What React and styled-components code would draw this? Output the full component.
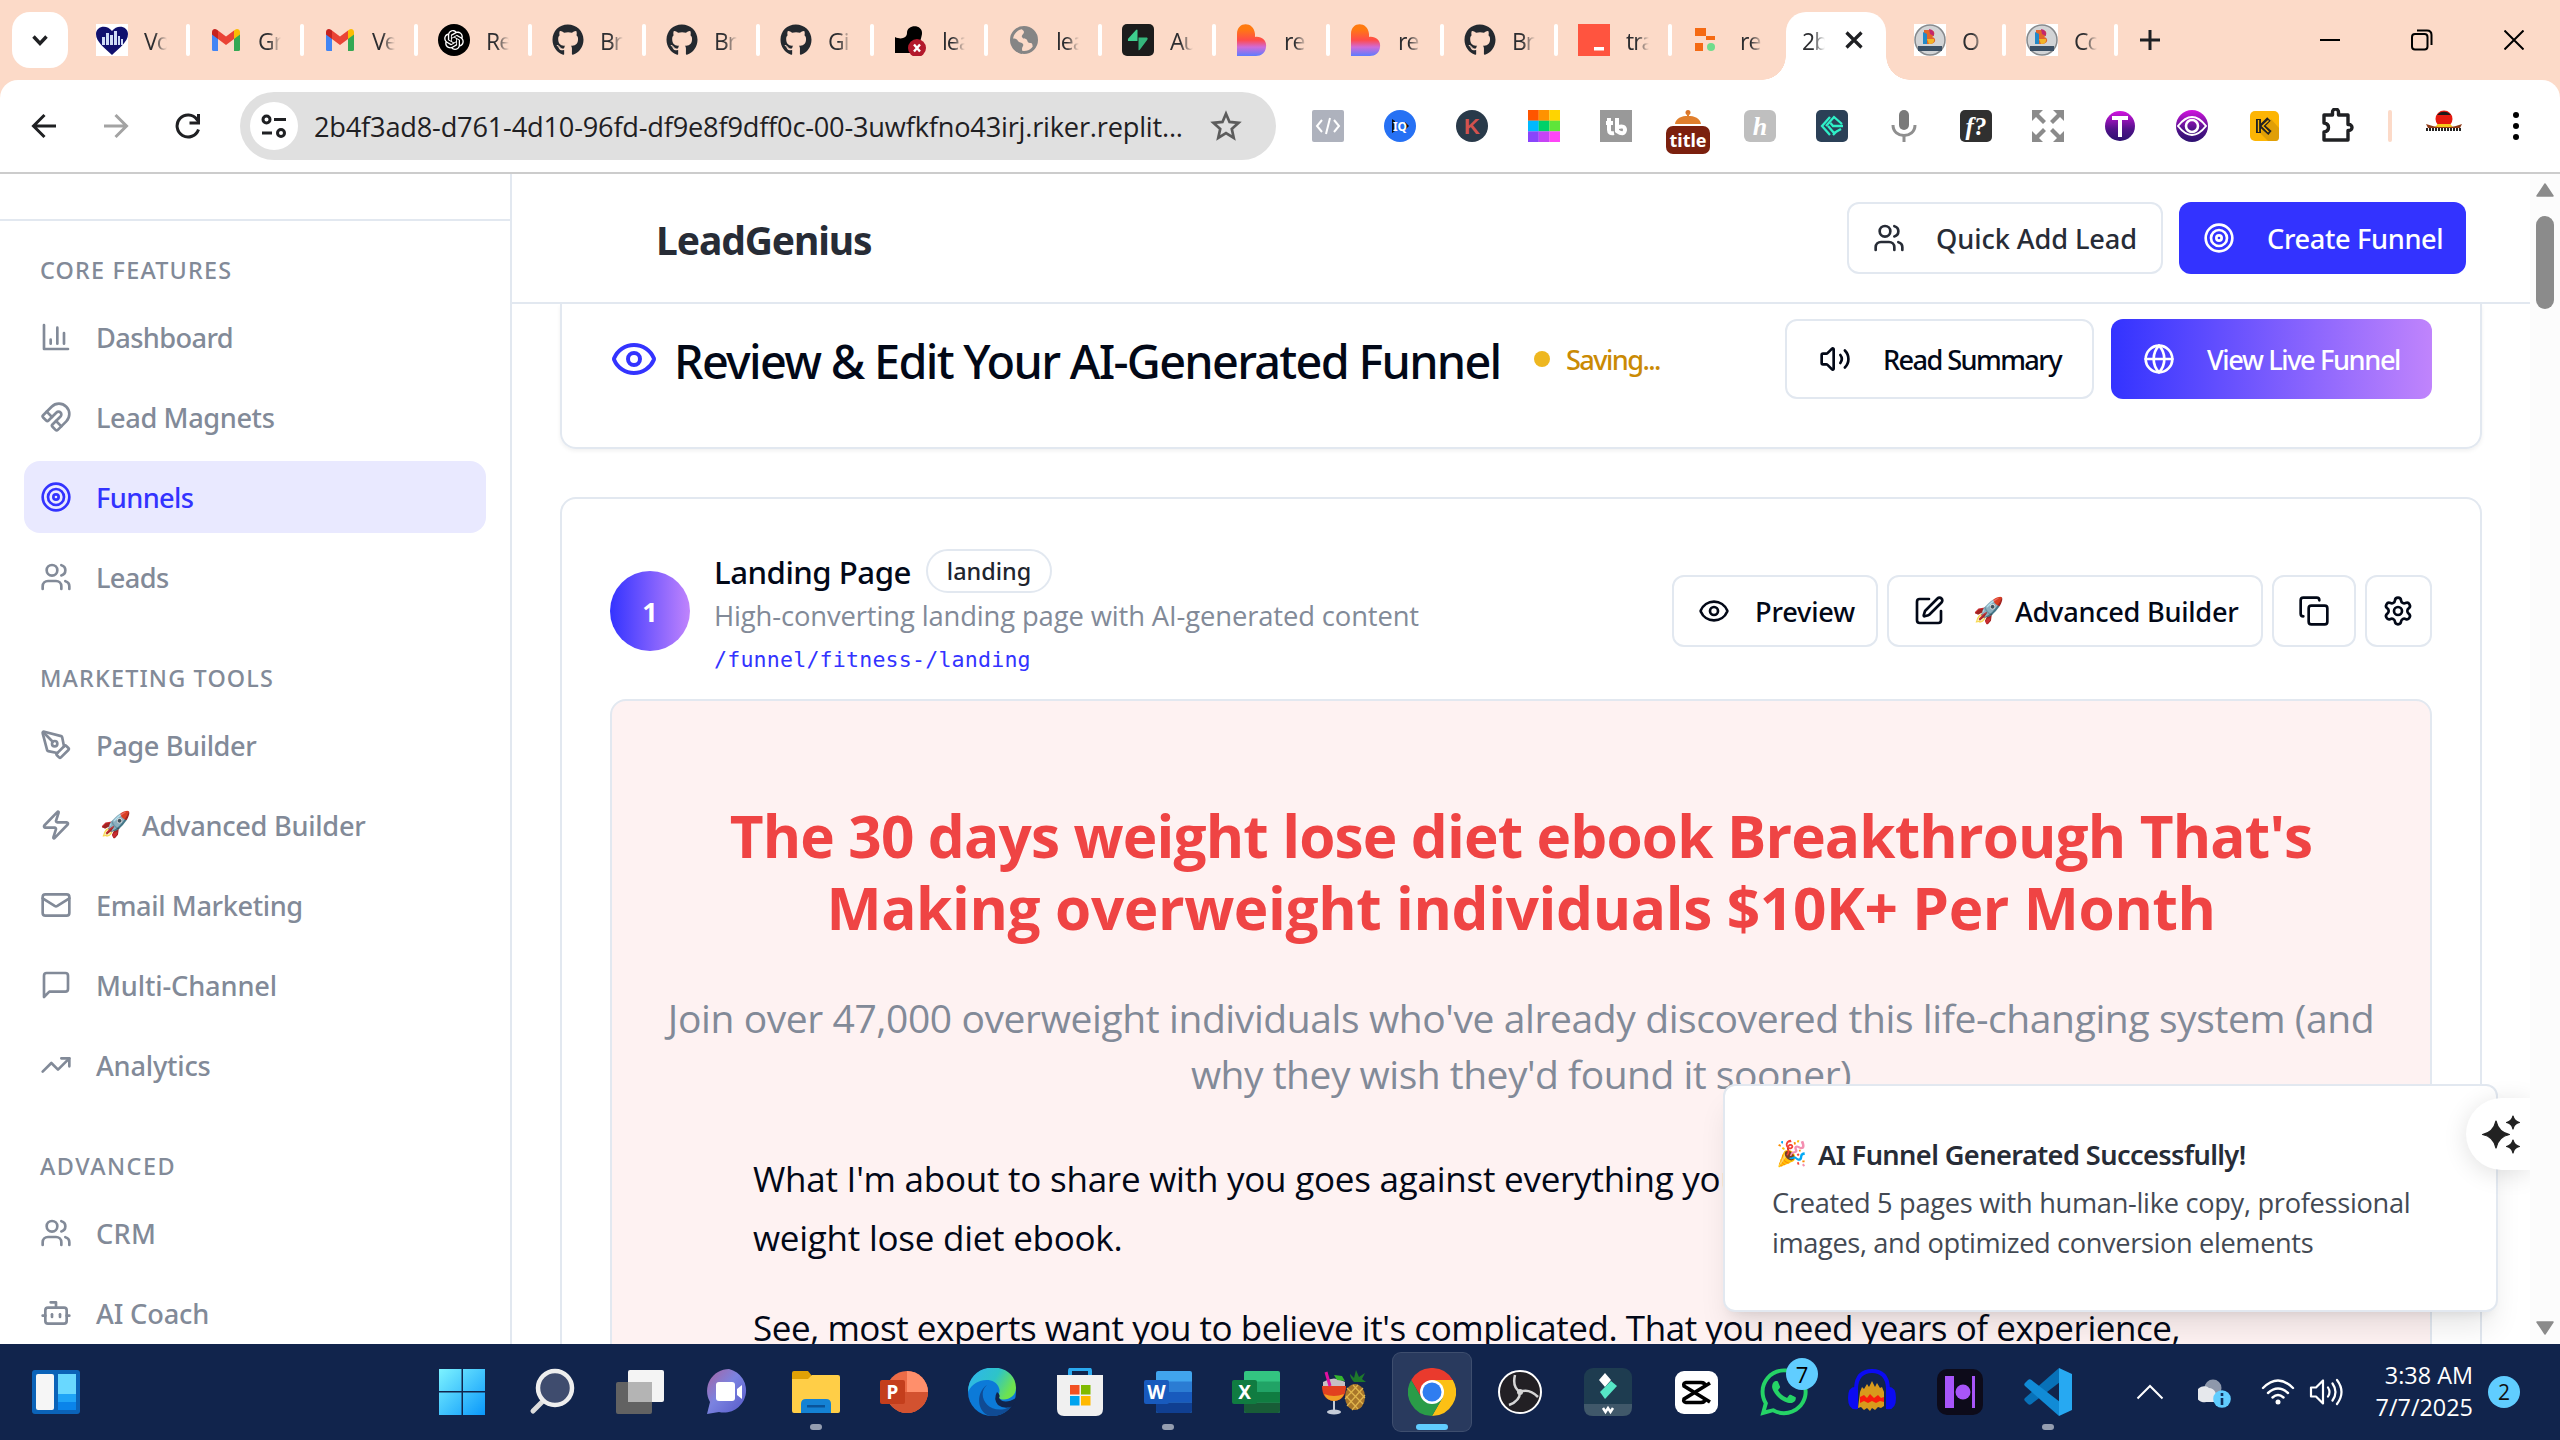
import React from "react";
import styled, { createGlobalStyle, css } from "styled-components";
import { FaGithub, FaWhatsapp } from "react-icons/fa";
import { RiOpenaiFill } from "react-icons/ri";
import { Magnet, PenTool, Zap, Bot, Mail, Settings, Copy, SquarePen } from "lucide-react";

const sans = `"Noto Sans", "Open Sans", sans-serif`;
const sansText = `"Open Sans", "Noto Sans", sans-serif`;
const line = "#e2e8f0";
const muted = "#828a98";
const brand = "#3333ff";
const ink = "#020817";

const Global = createGlobalStyle`
  *, *::before, *::after { box-sizing: border-box; }
  body { margin: 0; background: #fff; font-family: ${sans}; }
  svg { display: block; flex: none; }
`;

/* ---------- line icons ---------- */
const Line = styled.svg.attrs({
  viewBox: "0 0 24 24", fill: "none", stroke: "currentColor",
  strokeWidth: 2, strokeLinecap: "round", strokeLinejoin: "round",
})`
  width: ${(p) => p.$size || 32}px;
  height: ${(p) => p.$size || 32}px;
`;
const BarChart = () => <Line><path d="M3 3v18h18" /><path d="M18 17V9" /><path d="M13 17V5" /><path d="M8 17v-3" /></Line>;
const Target = () => <Line><circle cx="12" cy="12" r="10" /><circle cx="12" cy="12" r="6" /><circle cx="12" cy="12" r="2" /></Line>;
const Users = () => <Line><path d="M16 21v-2a4 4 0 0 0-4-4H6a4 4 0 0 0-4 4v2" /><circle cx="9" cy="7" r="4" /><path d="M22 21v-2a4 4 0 0 0-3-3.87" /><path d="M16 3.13a4 4 0 0 1 0 7.75" /></Line>;
const Chat = () => <Line><path d="M21 15a2 2 0 0 1-2 2H7l-4 4V5a2 2 0 0 1 2-2h14a2 2 0 0 1 2 2z" /></Line>;
const Trend = () => <Line><path d="m22 7-8.5 8.5-5-5L2 17" /><path d="M16 7h6v6" /></Line>;
const Eye = ({ size }) => <Line $size={size}><path d="M2.062 12.348a1 1 0 0 1 0-.696 10.75 10.75 0 0 1 19.876 0 1 1 0 0 1 0 .696 10.75 10.75 0 0 1-19.876 0" /><circle cx="12" cy="12" r="3" /></Line>;
const Volume = () => <Line><path d="M11 4.7a.7.7 0 0 0-1.2-.5L6.4 7.6A1.4 1.4 0 0 1 5.4 8H3a1 1 0 0 0-1 1v6a1 1 0 0 0 1 1h2.4a1.4 1.4 0 0 1 1 .4l3.4 3.4a.7.7 0 0 0 1.2-.5z" /><path d="M16 9a5 5 0 0 1 0 6" /><path d="M19.4 18.4a9 9 0 0 0 0-12.8" /></Line>;
const Globe = () => <Line><circle cx="12" cy="12" r="10" /><path d="M12 2a14.5 14.5 0 0 0 0 20 14.5 14.5 0 0 0 0-20" /><path d="M2 12h20" /></Line>;

/* ---------- browser frame ---------- */
const Screen = styled.div`
  width: 2560px; height: 1440px; overflow: hidden;
  display: flex; flex-direction: column; background: #fff;
`;
const TabStrip = styled.div`
  flex: none; height: 80px; display: flex; align-items: stretch;
  padding-left: 12px; background: #fcdac8; color: #1f2023;
`;
const TabSearch = styled.div`
  width: 56px; height: 56px; margin: 12px 8px 0 0; border-radius: 18px; background: #fff;
  display: flex; align-items: center; justify-content: center;
`;
const Tab = styled.div`
  width: ${(p) => p.$w || 114}px; padding-left: ${(p) => p.$pad || 20}px; height: 80px;
  display: flex; align-items: center; position: relative;
  &::after { content: ""; position: absolute; right: 0; top: 24px; width: 4px; height: 32px; border-radius: 2px;
    background: ${(p) => (p.$last ? "transparent" : "#fff")}; }
`;
const TabTitle = styled.span`
  width: 23px; margin-left: 16px; overflow: hidden; white-space: nowrap; flex: none;
  font: 400 23px/32px ${sansText}; letter-spacing: -1px; color: #2c2d30; padding-top: 2px;
  mask-image: linear-gradient(90deg, #000 45%, transparent 100%);
`;
const ActiveTab = styled.div`
  width: 100px; height: 68px; margin-top: 12px; background: #fff; border-radius: 20px 20px 0 0;
  display: flex; align-items: center; padding: 0 0 12px 16px; position: relative;
  &::before, &::after { content: ""; position: absolute; bottom: 0; width: 24px; height: 24px; }
  &::before { left: -24px; background: radial-gradient(circle at 0 0, transparent 23.5px, #fff 24px); }
  &::after { right: -24px; background: radial-gradient(circle at 100% 0, transparent 23.5px, #fff 24px); }
  ${TabTitle} { margin-left: 0; }
  svg { margin-left: 20px; }
`;
const NewTab = styled.div`
  width: 64px; display: flex; align-items: center; justify-content: center;
`;
const WindowButtons = styled.div`
  margin-left: auto; display: flex; align-items: center;
`;
const WindowButton = styled.div`
  width: 92px; display: flex; justify-content: center;
`;
const ToolbarFrame = styled.div` flex: none; background: #fcdac8; `;
const Toolbar = styled.div`
  height: 94px; padding: 0 8px; background: #fff; border-radius: 18px 18px 0 0;
  border-bottom: 2px solid #ccc; display: flex; align-items: center; color: #1f2023;
`;
const ToolCell = styled.div`
  width: 72px; height: 64px; display: flex; align-items: center; justify-content: center;
`;
const LabelCell = styled(ToolCell)` padding-top: 12px; `;
const UrlBar = styled.div`
  width: 1036px; height: 68px; margin: 0 16px; padding: 0 34px 0 10px; border-radius: 34px; background: #e0e0e0;
  display: flex; align-items: center;
`;
const SiteInfo = styled.div`
  width: 48px; height: 48px; border-radius: 50%; background: #fff; display: flex; align-items: center; justify-content: center;
`;
const Url = styled.span`
  flex: 1; margin-left: 16px; white-space: nowrap; font: 400 27.2px/40px ${sansText}; letter-spacing: -0.2px; color: #1f2023; padding-top: 2px;
`;
const ToolDivider = styled.div` width: 4px; height: 32px; margin: 0 16px; border-radius: 2px; background: #fcdac8; `;

/* ---------- app layout ---------- */
const Viewport = styled.div`
  flex: 1; min-height: 0; display: flex; position: relative; overflow: hidden;
`;
const Sidebar = styled.aside`
  width: 512px; flex: none; border-right: 2px solid ${line}; overflow: hidden; background: #fff;
`;
const SidebarTop = styled.div` height: 47px; border-bottom: 2px solid ${line}; `;
const Nav = styled.nav`
  padding: 33px 24px 0; display: flex; flex-direction: column; gap: 49px;
`;
const NavSection = styled.section` display: flex; flex-direction: column; gap: 8px; `;
const NavHeading = styled.h3`
  margin: 0 0 7px 16px; font: 500 23.4px/32px ${sans}; letter-spacing: ${(p) => p.$ls}px; color: ${muted};
`;
const NavItem = styled.a`
  height: 72px; padding-left: 16px; border-radius: 16px; display: flex; align-items: center; gap: 24px;
  color: ${(p) => (p.$active ? brand : muted)};
  background: ${(p) => (p.$active ? "#e9e9ff" : "transparent")};
`;
const NavLabel = styled.span`
  font: 500 27.2px/40px ${sans}; letter-spacing: ${(p) => p.$ls}px; white-space: nowrap; padding-top: 2px;
`;
const Emoji = styled.span`
  display: inline-block; width: 46px; padding-left: 4px; font: 400 25px/32px "Noto Color Emoji", ${sans}; letter-spacing: 0;
  vertical-align: top; margin-top: 3px; height: 36px; text-align: left;
`;
const Main = styled.main` width: 2018px; flex: none; display: flex; flex-direction: column; `;
const Header = styled.header`
  height: 130px; flex: none; border-bottom: 2px solid ${line}; padding: 0 64px 0 144px;
  display: flex; align-items: center; gap: 16px;
`;
const Brand = styled.h1`
  margin: 0 auto 0 0; font: 700 39px/56px ${sans}; letter-spacing: -1.1px; color: #272c36; padding-top: 3px;
`;
const Button = styled.button`
  width: ${(p) => p.$w}px; height: ${(p) => p.$h || 72}px; padding: 0 0 0 ${(p) => p.$pad}px; flex: none;
  display: flex; align-items: center; gap: ${(p) => p.$gap || 24}px;
  border: 2px solid ${line}; border-radius: 12px; background: #fff; color: ${(p) => p.$color || ink};
  font: 500 27.2px/40px ${sans}; letter-spacing: ${(p) => p.$ls || 0}px; white-space: nowrap; text-align: left;
  ${(p) => p.$solid && css`border: 0; color: #fff; background: ${p.$solid};`}
  & > span { padding-top: 2px; }
`;
const Content = styled.div` flex: 1; min-height: 0; overflow: hidden; padding: 0 48px; `;
const TitleCard = styled.section`
  height: 145px; padding: 15px 48px 0; border: 2px solid ${line}; border-top: 0; border-radius: 0 0 16px 16px;
  box-shadow: 0 2px 4px rgba(0,0,0,.06); display: flex; align-items: flex-start; gap: 17px;
`;
const TitleRow = styled.div` display: flex; align-items: center; height: 80px; margin-right: auto; `;
const BrandEye = styled.span` color: ${brand}; `;
const Title = styled.h2`
  margin: 0 0 0 16px; font: 500 46.8px/64px ${sans}; letter-spacing: -1.7px; color: ${ink}; white-space: nowrap; padding-top: 4px;
  width: 860px;
`;
const StatusDot = styled.i` width: 16px; height: 16px; border-radius: 50%; background: #eeb720; `;
const Status = styled.span`
  margin-left: 16px; font: 500 27.2px/40px ${sans}; letter-spacing: -1.6px; color: #ca8a04; padding-top: 2px;
`;
const PageCard = styled.section`
  margin-top: 48px; padding: 50px 48px 0; height: 900px; border: 2px solid ${line}; border-radius: 16px;
`;
const PageHead = styled.div` height: 124px; display: flex; align-items: center; gap: 9px; `;
const Step = styled.div`
  width: 80px; height: 80px; border-radius: 50%; background: linear-gradient(90deg, ${brand}, #c084fc);
  display: flex; align-items: center; justify-content: center; color: #fff; font: 700 27px/40px ${sans}; padding-top: 2px;
`;
const PageInfo = styled.div` margin: 0 auto 0 15px; height: 124px; `;
const NameRow = styled.div` height: 44px; display: flex; align-items: center; gap: 15px; `;
const PageName = styled.h3` margin: 0; width: 197px; padding-top: 2px; font: 500 31.2px/42px ${sans}; letter-spacing: -0.5px; color: ${ink}; white-space: nowrap; `;
const Badge = styled.span`
  width: 126px; height: 44px; border: 2px solid ${line}; border-radius: 22px; text-align: center;
  font: 500 23.4px/41px ${sans}; color: #20242d;
`;
const Description = styled.p` margin: 3px 0 0; font: 400 27.4px/40px ${sansText}; letter-spacing: -0.13px; color: ${muted}; white-space: nowrap; `;
const Path = styled.p` margin: 8px 0 0; font: 400 21.6px/32px "DejaVu Sans Mono", monospace; letter-spacing: 0.2px; color: ${brand}; white-space: nowrap; `;
const Preview = styled.article`
  margin-top: 26px; padding-top: 98px; height: 760px; border: 2px solid ${line}; border-radius: 16px; background: #fef2f2;
  white-space: nowrap;
`;
const Row = styled.span` display: block; letter-spacing: ${(p) => p.$ls}px; `;
const Headline = styled.h2` margin: 0; text-align: center; font: 700 58.5px/72px ${sansText}; color: #ef4444; `;
const Lead = styled.p` margin: 47px 0 0; text-align: center; font: 400 39px/56px ${sansText}; color: ${muted}; `;
const Copyblock = styled.div` width: 1536px; margin: 48px auto 0; font: 400 35px/58.5px ${sansText}; color: ${ink}; `;
const Para = styled.p` margin: 0 0 32px; `;

const Scrollbar = styled.div`
  width: 30px; background: #fcfcfc; display: flex; flex-direction: column; align-items: center; padding: 9px 0;
`;
const Thumb = styled.div` width: 18px; height: 93px; margin: 19px 0 auto; border-radius: 9px; background: #8b8b8b; `;

const Toast = styled.div`
  position: absolute; left: 1723px; top: 910px; width: 775px; height: 228px; padding: 49px 47px 0;
  background: #fff; border: 2px solid ${line}; border-radius: 12px;
  box-shadow: 0 20px 30px -6px rgba(0,0,0,.1), 0 8px 12px -8px rgba(0,0,0,.1); white-space: nowrap;
`;
const ToastTitle = styled.div` font: 600 27.2px/40px ${sans}; letter-spacing: -0.6px; color: #272c36; `;
const ToastText = styled.div` margin-top: 8px; font: 400 27.2px/40px ${sansText}; color: #434953; `;
const Assistant = styled.div`
  position: absolute; left: 2466px; top: 924px; width: 64px; height: 72px; border-radius: 36px 0 0 36px; background: #fff;
  box-shadow: 0 4px 24px rgba(0,0,0,.12); clip-path: inset(-40px 0 -40px -40px);
  display: flex; align-items: center; padding-left: 15px; color: #222;
`;

/* ---------- taskbar ---------- */
const Taskbar = styled.footer`
  flex: none; height: 96px; background: #11244c; display: flex; align-items: center; color: #fff;
`;
const Widgets = styled.div` width: 420px; padding-left: 32px; `;
const DockApp = styled.div`
  width: 88px; height: 80px; display: flex; align-items: center; justify-content: center; position: relative;
  &::before { content: ""; position: absolute; inset: 0 4px; border-radius: 9px;
    ${(p) => p.$state === "active" && css`background: rgba(255,255,255,.1); border: 1px solid rgba(255,255,255,.1);`} }
  &::after { content: ""; position: absolute; bottom: 2px; height: 6px; border-radius: 3px;
    ${(p) => p.$state === "open" && css`width: 12px; background: #949db0;`}
    ${(p) => p.$state === "active" && css`width: 32px; background: #60cdff;`} }
  & > svg { position: relative; }
`;
const Count = styled.span`
  position: absolute; right: 10px; top: 6px; width: 32px; height: 32px; border-radius: 50%; background: #60cdff; color: #000;
  font: 400 22px/32px ${sansText}; text-align: center;
`;
const Tray = styled.div` margin-left: auto; display: flex; align-items: center; height: 96px; padding-right: 40px; `;
const TrayIcon = styled.div` margin-right: ${(p) => p.$gap}px; `;
const Clock = styled.div`
  width: 100px; text-align: right; font: 400 23.4px/32px ${sansText}; white-space: nowrap; margin-right: 15px; padding-bottom: 2px;
`;
const Bell = styled.div`
  width: 32px; height: 32px; border-radius: 50%; background: #60cdff; color: #111; text-align: center; font: 400 21px/32px ${sansText};
`;

/* ---------- favicons ---------- */
const Fav = ({ children, size = 32 }) => <svg width={size} height={size} viewBox="0 0 32 32">{children}</svg>;
const Gmail = () => (
  <Fav>
    <path d="M2 8v17.500q0 1.500 1.500 1.500H8V14z" fill="#4285f4" /><path d="M24 14v13h4.500q1.500 0 1.500-1.500V8z" fill="#34a853" />
    <path d="M24 6.500V15l6-4.500V8c0-2.800-3-4-5-2.300z" fill="#fbbc04" /><path d="M8 6.500V15l-6-4.500V8c0-2.800 3-4 5-2.300z" fill="#c5221f" />
    <path d="M8 15V6.500l8 6 8-6V15l-8 6z" fill="#ea4335" />
  </Fav>
);
const GitHub = () => <FaGithub size={32} color="#24292f" />;
const Gpt = () => <Fav><circle cx="16" cy="16" r="16" /><g transform="translate(4 4)"><RiOpenaiFill size={24} color="#fff" /></g></Fav>;
const Heart = () => (
  <Fav><rect width="32" height="32" fill="#fff" />
    <path d="M16 31C9 24 0 18 0 10 0 2 11 0 16 7 21 0 32 2 32 10c0 8-9 14-16 21z" fill="#10106e" />
    <path d="M6 21v-8h3v8zM10 21V9h3v12zM14 21V11h3v10zM18 21V7h3v14zM22 21v-9h2v9zM25 21v-6h2v6z" fill="#cfdcf5" />
  </Fav>
);
const ErrorFav = () => (
  <Fav><path d="M1 13c6 3 12 1 12-4 0-9 16-9 15 1-1 6-3 8-3 19H1z" /><circle cx="23" cy="24" r="9" fill="#b3192c" /><path d="m20 20.500 6 7m0-7-6 7" stroke="#fff" strokeWidth="2.400" /></Fav>
);
const World = () => (
  <Fav>
    <circle cx="16" cy="16" r="12.500" fill="none" stroke="#858585" strokeWidth="3" />
    <path d="M4 15c3-1 5 0 6 2s4 1 5 3-1 3-1 5 1 3 0 5C8 29 3 23 4 15zM14 4c7-2 14 4 14 11 0 3-1 6-3 8-1-2 0-4-3-4s-2-3-4-4-3 0-4-2 2-3 2-5-3-2-2-4z" fill="#858585" />
  </Fav>
);
const Supa = () => <Fav><rect width="32" height="32" rx="5" fill="#1c1c1c" /><path d="M15.500 6v11H6q-.500-1.500.500-2.700L14 6q1-1 1.500 0z" fill="#3ecf8e" /><path d="M16.500 26V13.500H25q1.300 1 .300 2.300L18 25.500q-1 1.200-1.500.500z" fill="#35b67c" /></Fav>;
const Lovable = () => (
  <Fav><defs><linearGradient id="lov" x1="0" y1="0" x2="0" y2="1"><stop offset=".15" stopColor="#ff7a10" /><stop offset=".5" stopColor="#ff4b4b" /><stop offset=".72" stopColor="#d06bd8" /><stop offset="1" stopColor="#5b7cff" /></linearGradient></defs>
    <path d="M1 32V10c0-13 17-13 18 0v3c7-1 12 4 11 10-.5 6-5 9-10 9z" fill="url(#lov)" /></Fav>
);
const RedTab = () => <Fav><rect width="32" height="32" fill="#ff543f" /><rect x="16" y="23" width="10" height="3.500" fill="#fff" /></Fav>;
const Replit = () => <Fav><path d="M3 4h11v8H3zM14 12h9v4h-9zM3 19h8v8H3z" fill="#f56a13" /><circle cx="19" cy="23" r="4" fill="#6fdc8c" /></Fav>;
const Blogger = () => (
  <Fav><rect width="32" height="32" fill="#fff" /><circle cx="16" cy="16" r="15" fill="#d2d4d6" stroke="#86898c" strokeWidth="1.500" />
    <path d="M10 6h6c6 0 5 6 2 7 5 1 4 7-2 7h-6z" fill="#e2662a" /><path d="M15 5q6 1 5 7l-4-2z" fill="#c3276e" /><path d="M9 8l4 2v10H9z" fill="#2389c7" /><path d="M13 15h7q1 5-5 5z" fill="#f2b528" />
    <rect x="4" y="22" width="24" height="5" fill="#3c5064" /></Fav>
);
const tabs = [
  [Heart, "Vo"], [Gmail, "Gr"], [Gmail, "Ve"], [Gpt, "Re"], [GitHub, "Br"], [GitHub, "Br"], [GitHub, "Gi"],
  [ErrorFav, "lea"], [World, "lea"], [Supa, "Au"], [Lovable, "re"], [Lovable, "re"], [GitHub, "Br"], [RedTab, "tra"], [Replit, "re"],
];

/* ---------- extension icons ---------- */
const Glyph = styled.text`
  font-family: ${(p) => p.$face || sans}; font-weight: 700; font-size: ${(p) => p.$s}px; text-anchor: middle; fill: ${(p) => p.$c || "#fff"};
`;
const TitleExt = () => <svg width="44" height="44" viewBox="0 0 44 44"><circle cx="22" cy="2.500" r="2.500" fill="#d9742a" /><path d="M21 3h2v3h-2zM9 14C10 3 34 3 35 14z" fill="#e07f2d" /><rect y="16" width="44" height="28" rx="7" fill="#7b200e" /><Glyph x="22" y="37" $s={18}>title</Glyph></svg>;
const extensions = [
  () => <Fav><rect width="32" height="32" rx="2" fill="#aeb2bd" /><path d="m10 10-5 6 5 6M22 10l5 6-5 6M18 8l-4 16" stroke="#fff" strokeWidth="2" fill="none" /></Fav>,
  () => <Fav><circle cx="16" cy="16" r="16" fill="#2671f4" /><path d="M8 9v14l3-2V11zM25 16l-4-4v8z" fill="#111" /><Glyph x="16" y="20.500" $s={12}>IQ</Glyph></Fav>,
  () => <Fav><circle cx="16" cy="16" r="16" fill="#293a4a" /><Glyph x="16" y="24" $s={22} $c="#d2524e" $face={`"Liberation Sans", sans-serif`}>K</Glyph></Fav>,
  () => <Fav>{["#fe5500", "#ff9200", "#ffd400", "#00b9ff", "#00d169", "#5fe53a", "#8a45fb", "#c643f5", "#ff45f8"].map((c, i) => <rect key={c} x={(i % 3) * 10.67} y={Math.floor(i / 3) * 10.67} width="10.800" height="10.800" fill={c} />)}</Fav>,
  () => <Fav><rect width="32" height="32" fill="#999" /><path d="M9 8v12q0 4 5 3M6 13h7M17 8v13q7 5 8-1 0-5-7-3" stroke="#fff" strokeWidth="4" fill="none" /></Fav>,
  TitleExt,
  () => <Fav><rect width="32" height="32" rx="6" fill="#bfbfbf" /><Glyph x="16" y="25" $s={26} $face={`"Liberation Serif", serif`} fontStyle="italic">h</Glyph></Fav>,
  () => <Fav><rect width="32" height="32" rx="5" fill="#2b4057" /><path d="M14 7l-8 9 8 9M17 25l4-4M27 16H17l-2.500-3M10 16l8-9 8 7M12 16l6 7 7-4" stroke="#2ff0c8" strokeWidth="2.300" fill="none" /></Fav>,
  () => <Fav><rect x="11" y="0" width="10" height="20" rx="5" fill="#7a7a7a" /><path d="M5 15c0 14 22 14 22 0M16 26v6" stroke="#8f8f8f" strokeWidth="3" fill="none" /></Fav>,
  () => <Fav><rect width="32" height="32" rx="5" fill="#303030" /><Glyph x="16" y="25" $s={25} $face={`"Liberation Serif", serif`} fontStyle="italic">f?</Glyph></Fav>,
  () => <Fav><path d="M0 0h11l-4 4 7 7-3 3-7-7-4 4zM32 0v11l-4-4-7 7-3-3 7-7-4-4zM0 32V21l4 4 7-7 3 3-7 7 4 4zM32 32H21l4-4-7-7 3-3 7 7 4-4z" fill="#8b8b8b" /></Fav>,
  () => <Fav><defs><linearGradient id="pu" x1="0" y1="0" x2="0" y2="1"><stop stopColor="#d313e0" /><stop offset=".6" stopColor="#52128a" /><stop offset="1" stopColor="#2c1170" /></linearGradient></defs><circle cx="16" cy="16" r="15" fill="url(#pu)" /><path d="M8 6h16v4h-6v17h-4V10H8z" fill="#fff" /></Fav>,
  () => <Fav><circle cx="16" cy="16" r="16" fill="url(#pu)" /><path d="M2 16q14-18 28 0-14 18-28 0z" fill="none" stroke="#fff" strokeWidth="2" /><circle cx="16" cy="16" r="6" fill="none" stroke="#fff" strokeWidth="2.600" /></Fav>,
  () => <Fav><rect x="2" y="1" width="29" height="30" rx="5" fill="#fdb504" /><path d="m12 23 8 8h8q3 0 3-4V18l-8-9z" fill="#e09f06" /><path d="M10.500 9v14M21 9l-7 7 8 7" stroke="#222" strokeWidth="5" fill="none" /><path d="M10.500 10v12M20.500 10.500l-6 5.500 6 6" stroke="#fdb504" strokeWidth="1.300" fill="none" /></Fav>,
  () => <svg width="36" height="36" viewBox="0 0 36 36"><path d="M5 8h8.500V5a3 3 0 0 1 6 0v3H29v9.500h1a3 3 0 0 1 0 6h-1V33H5v-8c6-1 6-8 0-9z" transform="translate(1 -1)" fill="none" stroke="#1f2023" strokeWidth="3.400" strokeLinejoin="round" /></svg>,
];

/* ---------- taskbar icons ---------- */
const Pic = ({ children, w = 48, h = 48 }) => <svg width={w} height={h} viewBox={`0 0 ${w} ${h}`}>{children}</svg>;
const Office = ({ c, l }) => (
  <Pic><rect x="12" y="3" width="36" height="42" rx="2" fill={c[0]} /><path d="M12 13.500h36V24H12z" fill={c[1]} /><path d="M12 24h36v10.500H12z" fill={c[2]} /><path d="M12 34.500h36V43q0 2-2 2H14q-2 0-2-2z" fill={c[3]} />
    <rect x="0" y="12" width="25" height="24" rx="2" fill={c[4]} /><Glyph x="12.500" y="31" $s={19}>{l}</Glyph></Pic>
);
const dock = [
  [() => <Pic w={52} h={46}><defs><linearGradient id="win" x1="0" y1="0" x2="1" y2="1"><stop stopColor="#7df3ff" /><stop offset="1" stopColor="#0a98fb" /></linearGradient></defs><path d="M1 0h22.500v22H1zM25 0h22v22H25zM1 23.500h22.500V46H1zM25 23.500h22V46H25z" fill="url(#win)" /></Pic>],
  [() => <Pic><path d="M16 32 5 43" stroke="#dcdcdc" strokeWidth="5" strokeLinecap="round" /><circle cx="27" cy="20" r="17" fill="#3f4c6e" stroke="#eeeeee" strokeWidth="4.500" /></Pic>],
  [() => <Pic><rect x="12" y="2" width="36" height="32" rx="2" fill="#f4f4f4" /><rect x="0" y="14" width="36" height="32" rx="2" fill="#626262" /><path d="M12 14h24v20H12z" fill="#b4b4b4" /></Pic>],
  [() => <Pic><defs><linearGradient id="cht" x1="0" y1="0" x2="1" y2="1"><stop stopColor="#a9639f" /><stop offset=".45" stopColor="#7b83e0" /><stop offset="1" stopColor="#5558c9" /></linearGradient></defs><path d="M25 1a22 22 0 1 1-10 43l-12 2 3-12A22 22 0 0 1 25 1z" fill="url(#cht)" /><rect x="12" y="14" width="19" height="19" rx="3" fill="#fff" /><path d="m33 21 5-4v14l-5-4z" fill="#fff" /></Pic>],
  [() => <Pic><path d="M0 5q0-2 2-2h14l4 5v6H0z" fill="#e0a106" /><path d="M0 11h16l4-4h26q2 0 2 2v34q0 2-2 2H2q-2 0-2-2z" fill="#ffce47" /><path d="M9 45V36q0-5 5-5h20q5 0 5 5v9z" fill="#1482d4" /><rect x="15" y="37" width="18" height="2.500" fill="#0a549a" /></Pic>, "open"],
  [() => <Pic><circle cx="27" cy="24" r="21" fill="#ed6c47" /><path d="M27 3a21 21 0 0 1 21 21H27z" fill="#ff8f6b" /><path d="M48 24a21 21 0 0 1-42 0z" fill="#d35230" /><rect y="12" width="25" height="24" rx="2" fill="#c43e1c" /><Glyph x="12.500" y="31" $s={19}>P</Glyph></Pic>],
  [() => <Pic><defs><linearGradient id="edg" x1="0" y1="0" x2="1" y2=".4"><stop stopColor="#2fb4f0" /><stop offset=".6" stopColor="#2ec4c8" /><stop offset="1" stopColor="#6ee24e" /></linearGradient></defs><circle cx="24" cy="24" r="24" fill="#0c7ad8" /><path d="M0 24C0-8 48-8 48 20c0 10-12 14-17 10-2-3 2-5 0-10C27 8 6 10 0 24z" fill="url(#edg)" /><path d="M19 17c-10 8-2 28 18 24 3-1 6-3 7-4-4 8-14 12-22 11C8 44 8 24 19 17z" fill="#104b94" /><path d="M31 30q5 7 17 0l-3 8q-8 4-15-1-5-6-1-13 4 3 2 6z" fill="#11244c" /></Pic>],
  [() => <Pic><path d="M14 10V3q0-2 2-2h16q2 0 2 2v7" stroke="#29a9ef" strokeWidth="4" fill="none" /><path d="M1 7h46v34q0 7-7 7H8q-7 0-7-7z" fill="#f0f0f0" /><path d="M14 17h9.500v9.500H14z" fill="#f25022" /><path d="M25 17h9.500v9.500H25z" fill="#7fba00" /><path d="M14 28h9.500v9.500H14z" fill="#00a4ef" /><path d="M25 28h9.500v9.500H25z" fill="#ffb900" /></Pic>],
  [() => <Office l="W" c={["#41a5ee", "#2b7cd3", "#185abd", "#103f91", "#185abd"]} />, "open"],
  [() => <Office l="X" c={["#33c481", "#21a366", "#107c41", "#185c37", "#107c41"]} />],
  [() => <Pic><path d="M34 14c-4-4-4-8-4-8l4 4 2-8 3 7 6-4-3 6 4 3z" fill="#1e7a2a" /><ellipse cx="35" cy="29" rx="10" ry="13" fill="#a8762a" /><path d="m27 20 16 16M26 28l12 13M33 17l12 13M43 20 27 38M38 17 25 31M45 27 32 42" stroke="#e0b54c" strokeWidth="1.200" /><path d="M2 18h24q0 14-12 15Q2 32 2 18z" fill="#e2411f" /><path d="M3 14q11-7 22 0v4H3z" fill="#c7c0c4" /><path d="M4 26q10 4 20 0-3 7-10 7T4 26z" fill="#f0a026" /><path d="M14 33v10" stroke="#c5ccd8" strokeWidth="2" /><ellipse cx="14" cy="44" rx="7" ry="2.500" fill="#c5ccd8" /><path d="M6 4l4 14" stroke="#e010a0" strokeWidth="3" /><path d="m14 7 8 1 3 5-8-1z" fill="#35b52e" /></Pic>],
  [() => <Pic><path d="M3.200 12A24 24 0 0 1 44.800 12H24L13.600 30z" fill="#ea3a2d" /><path d="M44.800 12A24 24 0 0 1 24 48l10.400-18L24 12z" fill="#fcc015" /><path d="M24 48A24 24 0 0 1 3.200 12l10.400 18h20.800z" fill="#2a9c48" /><circle cx="24" cy="24" r="12" fill="#fff" /><circle cx="24" cy="24" r="9.500" fill="#2f7df0" /></Pic>, "active"],
  [() => <Pic><circle cx="24" cy="24" r="21" fill="#222024" stroke="#fff" strokeWidth="2" /><path d="M24 24q-8-5-5-17M24 24q9-4 18 5M24 24q0 9-11 13" stroke="#d5d5d5" strokeWidth="2.500" fill="none" /><circle cx="24" cy="24" r="3" fill="#d5d5d5" /></Pic>],
  [() => <Pic><rect width="48" height="48" rx="9" fill="#1e3c50" /><path d="M0 36h48v3q0 9-9 9H9q-9 0-9-9z" fill="#40586a" /><path d="m21 5 6 7-6 7-6-7z" fill="#fff" /><path d="m27 13 6 5-12 13-5-7z" fill="#56e6c6" /><path d="m19 40 2.500 4 2.500-4 2.500 4 2.500-4" stroke="#fff" strokeWidth="2.500" fill="none" /></Pic>],
  [() => <Pic><rect x="3" y="3" width="43" height="43" rx="9" fill="#fff" /><path d="M38 15 12 31q-1 3 2 3.500h15q4 0 4-3.500M38 34 12 18q-1-3 2-3.500h15q4 0 4 3.500" fill="none" stroke="#000" strokeWidth="3.600" /></Pic>],
  [() => <><FaWhatsapp size={54} color="#25d366" /><Count>7</Count></>],
  [() => <Pic><path d="M8 26V20Q9 3 24 3t16 17v6" fill="none" stroke="#0b0bf2" strokeWidth="4" /><path d="M12 24l2-5 2 2 3-5 2 3 3-6 3 6 2-4 3 5 2-1 2 5v14l-3 2-3-1-3 3-3-2-2 3-3-3-3 2-3-3-3 1z" fill="#d99a1c" /><path d="m12 29 4-2 3 3 3-4 4 4 4-3 3 3 3-1v5l-4-1-4 2-4-2-4 2-4-2-4 2z" fill="#fa1c0c" /><path d="M10 19v22Q0 43 0 30t10-11zM38 19v22q10 2 10-11T38 19z" fill="#0b0bf2" /></Pic>],
  [() => <Pic><rect x="1" y="1" width="46" height="46" rx="10" fill="#0d0b1a" /><path d="M9 8h9v32H9zM36 8h3v32h-3z" fill="#a855fa" /><circle cx="27" cy="24" r="7.500" fill="#a855fa" /></Pic>],
  [() => <Pic><path d="M35 0 1 30q-1.500 1.500 0 3l3 3q1.500 1.500 3.500 0L36 14z" fill="#0871b8" /><path d="M35 48 1 18q-1.500-1.500 0-3l3-3q1.500-1.500 3.500 0L36 34z" fill="#118bd6" /><path d="m35 0 13 6v36l-13 6z" fill="#27a9f2" /></Pic>, "open"],
];

const sections = [
  ["CORE FEATURES", 1.2, [[<BarChart />, "Dashboard", -0.6], [<Magnet size={32} />, "Lead Magnets", -0.4], [<Target />, "Funnels", -0.6], [<Users />, "Leads", -0.65]]],
  ["MARKETING TOOLS", 1.15, [[<PenTool size={32} />, "Page Builder", -0.4], [<Zap size={32} />, "🚀 Advanced Builder", -0.28], [<Mail size={32} />, "Email Marketing", -0.39], [<Chat />, "Multi-Channel", -0.13], [<Trend />, "Analytics", -0.2]]],
  ["ADVANCED", 1.5, [[<Users />, "CRM", 0.3], [<Bot size={32} />, "AI Coach", -0.15]]],
];

const withEmoji = (text) => {
  const m = text.match(/^(\p{Extended_Pictographic}) (.*)$/u);
  return m ? <><Emoji>{m[1]}</Emoji>{m[2]}</> : text;
};

export default function App() {
  return (
    <Screen>
      <Global />
      <TabStrip>
        <TabSearch><svg width="20" height="20" viewBox="0 0 20 20"><path d="m3.500 6.500 6.500 7 6.500-7" fill="none" stroke="#1f2023" strokeWidth="3.400" /></svg></TabSearch>
        {tabs.map(([Icon, title], i) => (
          <Tab key={i} $last={i === 14}><Icon /><TabTitle>{title}</TabTitle></Tab>
        ))}
        <ActiveTab>
          <TabTitle>2b</TabTitle>
          <svg width="18" height="18" viewBox="0 0 18 18"><path d="m1.500 1.500 15 15m0-15-15 15" stroke="#1f2023" strokeWidth="3.200" /></svg>
        </ActiveTab>
        <Tab $w={120} $pad={28}><Blogger /><TabTitle>O</TabTitle></Tab>
        <Tab $w={112}><Blogger /><TabTitle>Co</TabTitle></Tab>
        <NewTab><svg width="20" height="20" viewBox="0 0 20 20"><path d="M0 10h20M10 0v20" stroke="#1f2023" strokeWidth="3" /></svg></NewTab>
        <WindowButtons>
          <WindowButton><svg width="20" height="20" viewBox="0 0 20 20"><path d="M0 10h20" stroke="#000" strokeWidth="2" /></svg></WindowButton>
          <WindowButton><svg width="22" height="22" viewBox="0 0 22 22"><rect x="1" y="5" width="15.500" height="15.500" rx="3" fill="none" stroke="#000" strokeWidth="2" /><path d="M6 1.500h10q4.500 0 4.500 4.500v10" fill="none" stroke="#000" strokeWidth="2" /></svg></WindowButton>
          <WindowButton><svg width="20" height="20" viewBox="0 0 20 20"><path d="m.5.5 19 19m0-19-19 19" stroke="#000" strokeWidth="2" /></svg></WindowButton>
        </WindowButtons>
      </TabStrip>
      <ToolbarFrame>
        <Toolbar>
          <ToolCell><svg width="26" height="26" viewBox="0 0 26 26"><path d="M25 13H3M13.500 2 2.500 13l11 11" fill="none" stroke="#1f2023" strokeWidth="3" /></svg></ToolCell>
          <ToolCell><svg width="26" height="26" viewBox="0 0 26 26"><path d="M1 13h22M12.500 2l11 11-11 11" fill="none" stroke="#a3a3a3" strokeWidth="3" /></svg></ToolCell>
          <ToolCell><svg width="26" height="26" viewBox="0 0 26 26"><path d="M23.500 16.500A11 11 0 1 1 22 6.500l2 2.500" fill="none" stroke="#1f2023" strokeWidth="3" /><path d="M23.500 1v9h-9" fill="none" stroke="#1f2023" strokeWidth="3" /></svg></ToolCell>
          <UrlBar>
            <SiteInfo><svg width="26" height="26" viewBox="0 0 26 26" fill="none" stroke="#1f2023" strokeWidth="3"><circle cx="5.500" cy="6.500" r="3.500" /><path d="M13 6.500h12M1 20h10" /><circle cx="20" cy="20" r="3.500" /></svg></SiteInfo>
            <Url>2b4f3ad8-d761-4d10-96fd-df9e8f9dff0c-00-3uwfkfno43irj.riker.replit...</Url>
            <svg width="32" height="32" viewBox="0 0 30 30"><path d="m15 3.500 3.300 7.700 8.500.8-6.400 5.700 1.900 8.500-7.300-4.500-7.300 4.500 1.900-8.500L3.200 12l8.500-.8z" fill="none" stroke="#5c5c5c" strokeWidth="2.500" /></svg>
          </UrlBar>
          {extensions.map((Ext, i) => {
            const Cell = Ext === TitleExt ? LabelCell : ToolCell;
            return <Cell key={i}><Ext /></Cell>;
          })}
          <ToolDivider />
          <ToolCell><svg width="38" height="32" viewBox="0 0 38 32"><circle cx="19" cy="9" r="8.500" fill="#e6190f" /><path d="M12 5a9 9 0 0 1 14 0z" fill="#1a1a1a" /><path d="M13 14h12l3 3H10z" fill="#f6c71c" /><path d="M1 14q9 3 12 3h12q4 0 12-3l-2 4H3z" fill="#8e3a17" /><path d="M1 19.500h36" stroke="#222" strokeWidth="3" strokeDasharray="2 1" /></svg></ToolCell>
          <ToolCell><svg width="8" height="30" viewBox="0 0 8 30"><circle cx="4" cy="4" r="3" /><circle cx="4" cy="15" r="3" /><circle cx="4" cy="26" r="3" /></svg></ToolCell>
        </Toolbar>
      </ToolbarFrame>

      <Viewport>
        <Sidebar>
          <SidebarTop />
          <Nav>
            {sections.map(([name, spacing, items]) => (
              <NavSection key={name}>
                <NavHeading $ls={spacing}>{name}</NavHeading>
                {items.map(([icon, label, ls]) => (
                  <NavItem key={label} $active={label === "Funnels"}>{icon}<NavLabel $ls={ls}>{withEmoji(label)}</NavLabel></NavItem>
                ))}
              </NavSection>
            ))}
          </Nav>
        </Sidebar>
        <Main>
          <Header>
            <Brand>LeadGenius</Brand>
            <Button $w={316} $pad={24} $gap={31} $color="#272c36" $ls={-0.1}><Users /><span>Quick Add Lead</span></Button>
            <Button $w={287} $pad={24} $gap={32} $ls={-0.35} $solid={brand}><Target /><span>Create Funnel</span></Button>
          </Header>
          <Content>
            <TitleCard>
              <TitleRow>
                <BrandEye><Eye size={48} /></BrandEye>
                <Title>Review &amp; Edit Your AI-Generated Funnel</Title>
                <StatusDot /><Status>Saving...</Status>
              </TitleRow>
              <Button $w={309} $h={80} $pad={32} $gap={32} $ls={-1.6}><Volume /><span>Read Summary</span></Button>
              <Button $w={321} $h={80} $pad={32} $gap={32} $ls={-1.4} $solid={`linear-gradient(90deg, ${brand}, #c084fc)`}><Globe /><span>View Live Funnel</span></Button>
            </TitleCard>
            <PageCard>
              <PageHead>
                <Step>1</Step>
                <PageInfo>
                  <NameRow><PageName>Landing Page</PageName><Badge>landing</Badge></NameRow>
                  <Description>High-converting landing page with AI-generated content</Description>
                  <Path>/funnel/fitness-/landing</Path>
                </PageInfo>
                <Button $w={206} $pad={24} $gap={25} $ls={-0.2}><Eye /><span>Preview</span></Button>
                <Button $w={376} $pad={24} $ls={-0.28}><SquarePen size={32} /><span>{withEmoji("🚀 Advanced Builder")}</span></Button>
                <Button $w={84} $pad={24}><Copy size={32} /></Button>
                <Button $w={67} $pad={15}><Settings size={32} /></Button>
              </PageHead>
              <Preview>
                <Headline>
                  <Row $ls={-0.85}>The 30 days weight lose diet ebook Breakthrough That's</Row>
                  <Row $ls={-0.38}>Making overweight individuals $10K+ Per Month</Row>
                </Headline>
                <Lead>
                  <Row $ls={-0.4}>Join over 47,000 overweight individuals who've already discovered this life-changing system (and</Row>
                  <Row $ls={-0.5}>why they wish they'd found it sooner)</Row>
                </Lead>
                <Copyblock>
                  <Para>
                    <Row $ls={-0.24}>What I'm about to share with you goes against everything you</Row>
                    <Row $ls={-0.25}>weight lose diet ebook.</Row>
                  </Para>
                  <Para><Row $ls={-0.45}>See, most experts want you to believe it's complicated. That you need years of experience,</Row></Para>
                </Copyblock>
              </Preview>
            </PageCard>
          </Content>
        </Main>
        <Scrollbar>
          <svg width="18" height="14" viewBox="0 0 18 14"><path d="M9 1 17 13H1z" fill="#8b8b8b" stroke="#8b8b8b" strokeWidth="1.500" strokeLinejoin="round" /></svg>
          <Thumb />
          <svg width="18" height="14" viewBox="0 0 18 14"><path d="M9 13 1 1h16z" fill="#8b8b8b" stroke="#8b8b8b" strokeWidth="1.500" strokeLinejoin="round" /></svg>
        </Scrollbar>
        <Toast>
          <ToastTitle>{withEmoji("🎉 AI Funnel Generated Successfully!")}</ToastTitle>
          <ToastText>
            <Row $ls={-0.28}>Created 5 pages with human-like copy, professional</Row>
            <Row $ls={-0.36}>images, and optimized conversion elements</Row>
          </ToastText>
        </Toast>
        <Assistant>
          <svg width="42" height="42" viewBox="0 0 42 42"><path d="M15 8q2.500 11.500 13.500 13.500Q17.500 23.500 15 35 12.500 23.500 1.500 21.500 12.500 19.500 15 8zM32 3q1.200 5.500 6.500 6.500-5.300 1-6.500 6.500-1.200-5.500-6.500-6.500 5.300-1 6.500-6.500zM32 27q1.200 5.500 6.500 6.500-5.300 1-6.500 6.500-1.200-5.500-6.500-6.500 5.300-1 6.500-6.500z" fill="#222" stroke="#222" strokeWidth="1.200" strokeLinejoin="round" /></svg>
        </Assistant>
      </Viewport>

      <Taskbar>
        <Widgets><Pic w={48} h={44}><rect width="48" height="44" rx="3" fill="#0b63b8" /><rect x="4" y="4" width="18" height="36" rx="2" fill="#f6f6f6" /><path d="M26 4h18v20H26z" fill="#69d8ff" /><path d="M26 24h18v8H26z" fill="#1fa4f7" /><path d="M26 32h18v8H26z" fill="#0a84ea" /></Pic></Widgets>
        {dock.map(([Icon, state], i) => <DockApp key={i} $state={state}><Icon /></DockApp>)}
        <Tray>
          <TrayIcon $gap={34}><svg width="28" height="16" viewBox="0 0 28 16"><path d="M1.500 14.500 14 2l12.500 12.500" fill="none" stroke="#fff" strokeWidth="2" /></svg></TrayIcon>
          <TrayIcon $gap={29}><svg width="34" height="32" viewBox="0 0 34 32"><circle cx="15" cy="12" r="8.500" fill="#8e98ab" /><path d="M8 26a8 8 0 1 1 3-14q8 0 8 14z" fill="#e6e8ec" /><circle cx="24" cy="23" r="8.800" fill="#60cdff" /><path d="M24 17v3M24 22v7" stroke="#10305c" strokeWidth="2.600" /></svg></TrayIcon>
          <TrayIcon $gap={14}><svg width="34" height="28" viewBox="0 0 34 28"><g fill="none" stroke="#fff" strokeWidth="2.400" strokeLinecap="round"><path d="M2 10q15-15 30 0M7 15q10-9 20 0M11.500 19.500q5.500-5 11 0" /></g><circle cx="17" cy="24" r="2.500" fill="#fff" /></svg></TrayIcon>
          <TrayIcon $gap={30}><svg width="34" height="30" viewBox="0 0 34 30"><g fill="none" stroke="#fff" strokeWidth="2.200" strokeLinejoin="round" strokeLinecap="round"><path d="M2 10.500h5l7-7v23l-7-7H2zM19 10.500q3 4.500 0 9M23.500 6.500q6 8.500 0 17M28 3q9 12 0 24" /></g></svg></TrayIcon>
          <Clock>3:38 AM<br />7/7/2025</Clock>
          <Bell>2</Bell>
        </Tray>
      </Taskbar>
    </Screen>
  );
}
